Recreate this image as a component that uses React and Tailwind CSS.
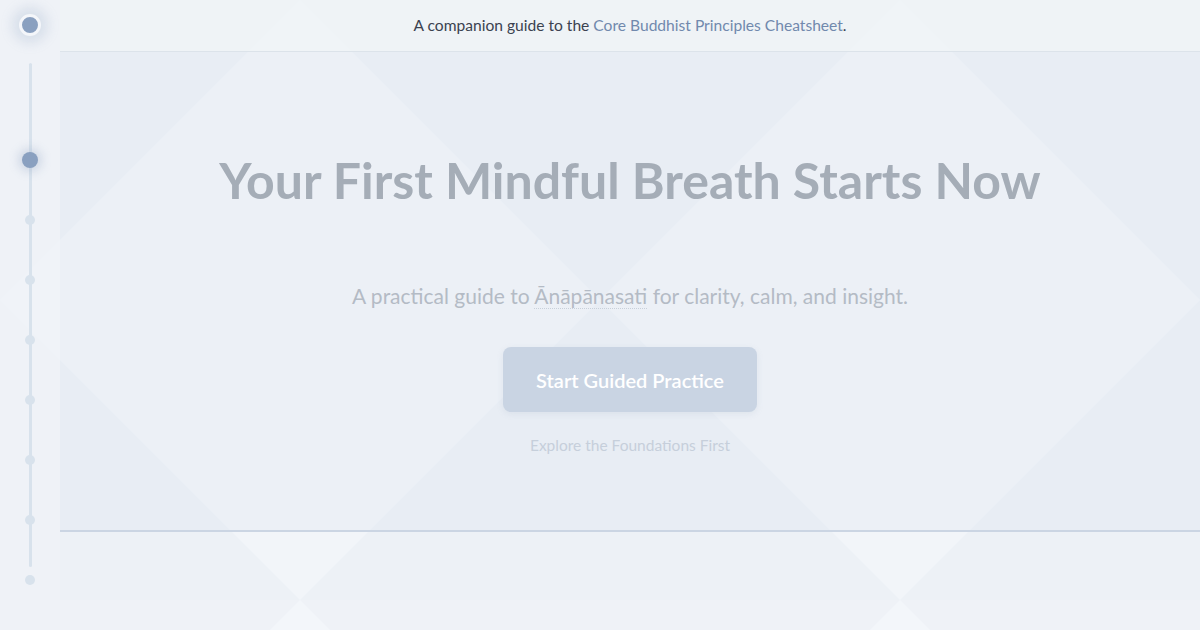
import React from "react";

function Backdrop() {
  return (
    <svg
      className="absolute inset-0 h-full w-full"
      viewBox="0 0 1200 630"
      preserveAspectRatio="none"
      aria-hidden="true"
    >
      <rect x="0" y="0" width="1200" height="630" fill="#edf1f6" />
      <polygon points="300,0 600,300 300,600 0,300" fill="#f2f5f9" />
      <polygon points="900,0 1200,300 900,600 600,300" fill="#f2f5f9" />
      <polygon points="300,600 600,900 300,1200 0,900" fill="#f4f7fa" />
      <polygon points="900,600 1200,900 900,1200 600,900" fill="#f4f7fa" />
    </svg>
  );
}

const font = { fontFamily: "Lato, 'Noto Sans', sans-serif" };

export default function App() {
  const dots = [0, 1, 2, 3, 4, 5, 6, 7];
  return (
    <div
      className="relative flex h-[630px] w-[1200px] overflow-hidden"
      style={font}
    >
      <Backdrop />

      {/* progress rail */}
      <aside className="relative z-10 flex w-[60px] shrink-0 flex-col items-center bg-[#eff3f7]/80">
        <div className="flex h-[50px] items-center justify-center">
          <span className="block h-[22px] w-[22px] rounded-full border-[3px] border-[#f4f6fa] bg-[#8aa0c0] shadow-[0_0_12px_7px_rgba(138,160,192,0.22)]" />
        </div>
        <div className="relative w-full">
          <span className="absolute left-[29px] top-[13px] h-[504px] w-[3px] rounded-full bg-[#d8e2ec]" />
          <ul className="relative flex flex-col items-center pt-[80px]">
            {dots.map((i) => (
              <li key={i} className="flex h-[60px] w-full items-center justify-center">
                {i === 0 ? (
                  <span className="block h-[16px] w-[16px] rounded-full bg-[#8aa0c0] shadow-[0_0_10px_4px_rgba(138,160,192,0.3)]" />
                ) : (
                  <span className="block h-[10px] w-[10px] rounded-full bg-[#d8e2ec]" />
                )}
              </li>
            ))}
          </ul>
        </div>
      </aside>

      {/* main column */}
      <main className="relative z-10 flex min-w-0 flex-1 flex-col">
        <header className="flex h-[52px] items-center justify-center border-b border-[#dce3ea] bg-[#f0f3f7]/70">
          <p className="text-[15.6px] text-[#3b4250]">
            A companion guide to the{" "}
            <a className="text-[#7189ad]">Core Buddhist Principles Cheatsheet</a>.
          </p>
        </header>

        <section className="flex h-[480px] flex-col items-center border-b-2 border-[#cbd5e3] bg-[#dbe3f0]/25 pt-[96px]">
          <h1 className="text-[50px] font-bold leading-[64px] text-[#a5adb7]">
            Your First Mindful Breath Starts Now
          </h1>
          <p className="mt-[69px] text-[21px] leading-[30px] text-[#b4bbc5]">
            A practical guide to{" "}
            <abbr
              title="Mindfulness of breathing"
              className="border-b border-dotted border-[#c8d0da] no-underline"
            >
              Ānāpānasati
            </abbr>{" "}
            for clarity, calm, and insight.
          </p>
          <button className="mt-[36px] flex h-[65px] items-center rounded-lg bg-[#c9d4e3] px-[33px] text-[20px] font-semibold leading-[30px] text-white shadow-[0_2px_6px_rgba(140,160,190,0.15)]">
            Start Guided Practice
          </button>
          <a className="mt-[22px] text-[15.5px] leading-[22px] text-[#c6cfdb]">
            Explore the Foundations First
          </a>
        </section>

        <section className="h-[68px]" />
        <section className="flex-1 bg-[#f3f6f9]/40" />
      </main>
    </div>
  );
}
